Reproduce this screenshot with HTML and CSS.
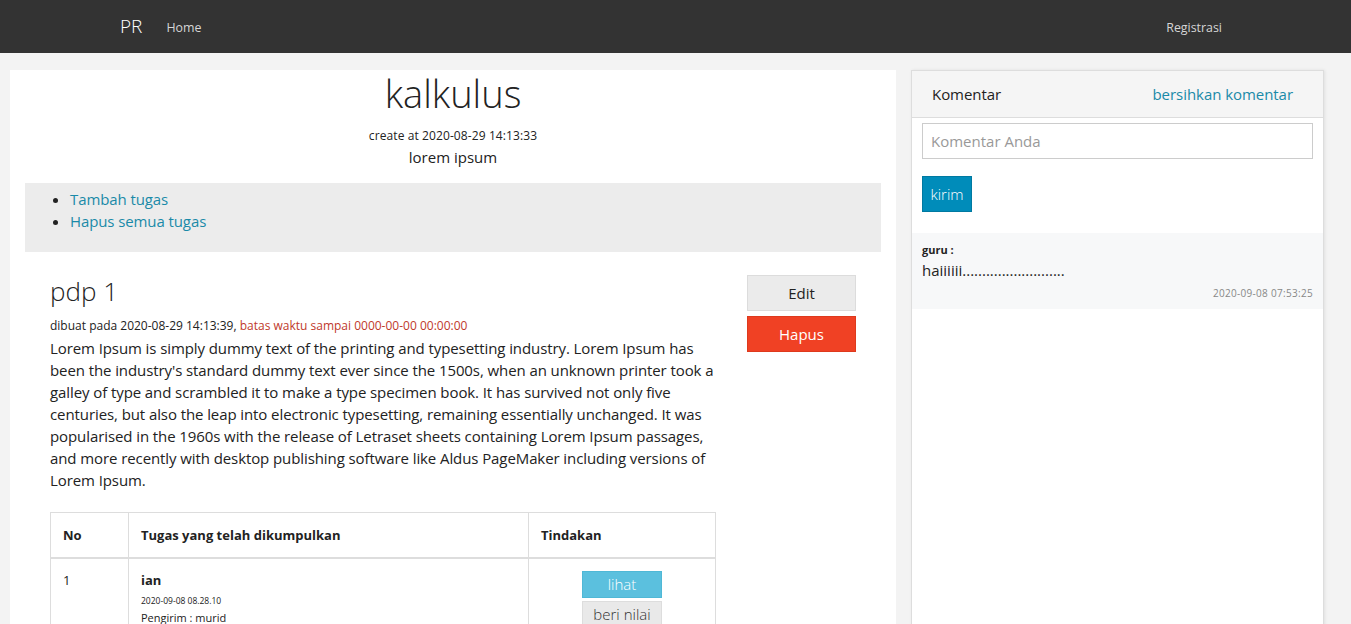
FILE: index.html
```html
<!DOCTYPE html>
<html lang="id">
<head>
<meta charset="utf-8">
<title>kalkulus</title>
<link rel="stylesheet" href="styles.css">
</head>
<body>
<nav class="topbar">
  <div class="topbar-left">
    <a class="brand" href="#">PR</a>
    <a class="nav-link" href="#">Home</a>
  </div>
  <a class="nav-link nav-right" href="#">Registrasi</a>
</nav>

<div class="page">
  <main class="card">
    <h1 class="title">kalkulus</h1>
    <div class="created">create at 2020-08-29 14:13:33</div>
    <div class="desc">lorem ipsum</div>

    <div class="actions-box">
      <ul>
        <li><a href="#">Tambah tugas</a></li>
        <li><a href="#">Hapus semua tugas</a></li>
      </ul>
    </div>

    <section class="task">
      <div class="task-body">
        <h2 class="task-title">pdp 1</h2>
        <div class="task-meta">dibuat pada 2020-08-29 14:13:39, <span class="deadline">batas waktu sampai 0000-00-00 00:00:00</span></div>
        <p class="task-text">Lorem Ipsum is simply dummy text of the printing and typesetting industry. Lorem Ipsum has been the industry's standard dummy text ever since the 1500s, when an unknown printer took a galley of type and scrambled it to make a type specimen book. It has survived not only five centuries, but also the leap into electronic typesetting, remaining essentially unchanged. It was popularised in the 1960s with the release of Letraset sheets containing Lorem Ipsum passages, and more recently with desktop publishing software like Aldus PageMaker including versions of Lorem Ipsum.</p>

        <table class="submissions">
          <thead>
            <tr>
              <th class="col-no">No</th>
              <th class="col-task">Tugas yang telah dikumpulkan</th>
              <th class="col-act">Tindakan</th>
            </tr>
          </thead>
          <tbody>
            <tr>
              <td class="num">1</td>
              <td>
                <div class="sub-name">ian</div>
                <div class="sub-date">2020-09-08 08.28.10</div>
                <div class="sub-sender">Pengirim : murid</div>
              </td>
              <td class="act-cell">
                <div class="act-buttons">
                  <a class="btn btn-info" href="#">lihat</a>
                  <a class="btn btn-light" href="#">beri nilai</a>
                </div>
              </td>
            </tr>
          </tbody>
        </table>
      </div>
      <div class="task-buttons">
        <a class="btn btn-edit" href="#">Edit</a>
        <a class="btn btn-alert" href="#">Hapus</a>
      </div>
    </section>
  </main>

  <aside class="panel">
    <div class="panel-head">
      <span>Komentar</span>
      <a href="#">bersihkan komentar</a>
    </div>
    <form class="comment-form">
      <input type="text" placeholder="Komentar Anda">
      <button type="button" class="btn-send">kirim</button>
    </form>
    <div class="comment">
      <div class="comment-author">guru :</div>
      <div class="comment-text">haiiiiii..........................</div>
      <div class="comment-date">2020-09-08 07:53:25</div>
    </div>
  </aside>
</div>
</body>
</html>
```

FILE: styles.css
```css
* { box-sizing: border-box; }

html, body {
  margin: 0;
  padding: 0;
}

body {
  background: #f3f3f3;
  font-family: "Open Sans", "DejaVu Sans", sans-serif;
  color: #222;
  height: 624px;
  overflow: hidden;
}

a { text-decoration: none; }

.topbar {
  height: 53px;
  background: #333;
  display: flex;
  align-items: center;
  justify-content: space-between;
  padding: 0 129px 0 120px;
}

.topbar-left {
  display: flex;
  align-items: center;
  gap: 24px;
}

.brand {
  color: #fff;
  font-size: 19px;
  font-weight: 300;
  line-height: 53px;
}

.nav-link {
  color: #d6d6d6;
  font-size: 12.4px;
  line-height: 53px;
  padding-top: 2px;
}

.page {
  display: flex;
  align-items: flex-start;
  gap: 15px;
  padding: 17px 0 0 10px;
}

.card {
  width: 886px;
  flex: none;
  background: #fff;
  padding: 0 15px;
  height: 560px;
}

.title {
  margin: 0;
  text-align: center;
  font-size: 38px;
  font-weight: 300;
  line-height: 46px;
  color: #222;
}

.created {
  margin-top: 10px;
  text-align: center;
  font-size: 12px;
  letter-spacing: 0.1px;
  line-height: 20px;
}

.desc {
  text-align: center;
  font-size: 15px;
  line-height: 22px;
}

.actions-box {
  margin-top: 15px;
  background: #ececec;
  padding: 5px 0 20px;
  height: 69px;
}

.actions-box ul {
  margin: 0;
  padding-left: 45px;
}

.actions-box li {
  font-size: 15px;
  line-height: 22px;
  letter-spacing: -0.1px;
}

.actions-box a,
.panel-head a {
  color: #1a8aa8;
}

.task {
  display: flex;
  align-items: flex-start;
  gap: 31px;
  padding: 0 25px;
  margin-top: 22px;
}

.task-body {
  width: 666px;
  flex: none;
}

.task-title {
  margin: 0 0 10px;
  font-size: 26px;
  font-weight: 300;
  line-height: 34px;
  color: #222;
}

.task-meta {
  font-size: 12px;
  line-height: 16px;
}

.deadline { color: #c0392b; }

.task-text {
  margin: 3px 0 0;
  font-size: 15px;
  line-height: 22px;
  letter-spacing: -0.09px;
  color: #222;
}

.submissions {
  margin-top: 21px;
  width: 666px;
  border-collapse: collapse;
  border: 1px solid #ddd;
}

.submissions th {
  text-align: left;
  font-size: 13px;
  font-weight: 700;
  height: 45px;
  padding: 0 12px;
  border: 1px solid #ddd;
  border-bottom: 2px solid #ddd;
}

.col-no { width: 78px; }
.col-task { width: 400px; }

.submissions td {
  vertical-align: top;
  border: 1px solid #ddd;
  padding: 10px 12px 0;
  font-size: 13px;
}

.num { line-height: 22px; }

.sub-name {
  font-weight: 700;
  font-size: 13px;
  line-height: 22px;
}

.sub-date {
  font-size: 8.5px;
  line-height: 20px;
}

.sub-sender {
  font-size: 11px;
  line-height: 14px;
}

.submissions td.act-cell {
  padding-top: 12px;
}

.act-buttons {
  display: flex;
  flex-direction: column;
  align-items: center;
  gap: 3px;
}

.btn {
  display: flex;
  align-items: center;
  justify-content: center;
  font-size: 15px;
  font-weight: 400;
}

.btn-info {
  width: 80px;
  height: 27px;
  background: #5bc0de;
  color: #fff;
  font-weight: 300;
  border: 1px solid #4fb8d6;
}

.btn-light {
  width: 80px;
  height: 27px;
  background: #e9e9e9;
  color: #333;
  font-weight: 300;
  border: 1px solid #ddd;
}

.task-buttons {
  display: flex;
  flex-direction: column;
  gap: 5px;
  margin-top: 1px;
}

.btn-edit {
  width: 109px;
  height: 36px;
  background: #ebebeb;
  border: 1px solid #dcdcdc;
  color: #222;
}

.btn-alert {
  width: 109px;
  height: 36px;
  background: #f04124;
  border: 1px solid #de3a1d;
  color: #fff;
}

.panel {
  width: 413px;
  flex: none;
  background: #fff;
  border: 1px solid #ddd;
  box-shadow: 1px 0 3px rgba(0,0,0,0.08);
  height: 560px;
}

.panel-head {
  height: 47px;
  background: #f5f5f5;
  border-bottom: 1px solid #ddd;
  display: flex;
  align-items: center;
  justify-content: space-between;
  padding: 0 30px 0 20px;
  font-size: 15px;
  letter-spacing: -0.05px;
}

.panel-head span { color: #222; }

.comment-form {
  padding: 5px 10px 0;
  display: flex;
  flex-direction: column;
  align-items: flex-start;
}

.comment-form input {
  width: 391px;
  height: 36px;
  border: 1px solid #ccc;
  padding: 0 8px;
  font-family: "Open Sans", sans-serif;
  font-size: 15px;
  color: #333;
}

.comment-form input::placeholder {
  color: #999;
}

.btn-send {
  margin-top: 17px;
  width: 50px;
  height: 36px;
  background: #008cba;
  border: 1px solid #0079a1;
  color: #fff;
  font-family: "Open Sans", sans-serif;
  font-size: 15px;
  font-weight: 300;
  padding: 0;
}

.comment {
  margin-top: 21px;
  background: #f7f8f9;
  padding: 8px 10px 7px;
  height: 76px;
}

.comment-author {
  font-size: 11px;
  font-weight: 700;
  line-height: 18px;
}

.comment-text {
  font-size: 15px;
  line-height: 22px;
}

.comment-date {
  text-align: right;
  font-size: 10px;
  color: #888;
  line-height: 16px;
  margin-top: 4px;
  letter-spacing: 0.3px;
}
```
